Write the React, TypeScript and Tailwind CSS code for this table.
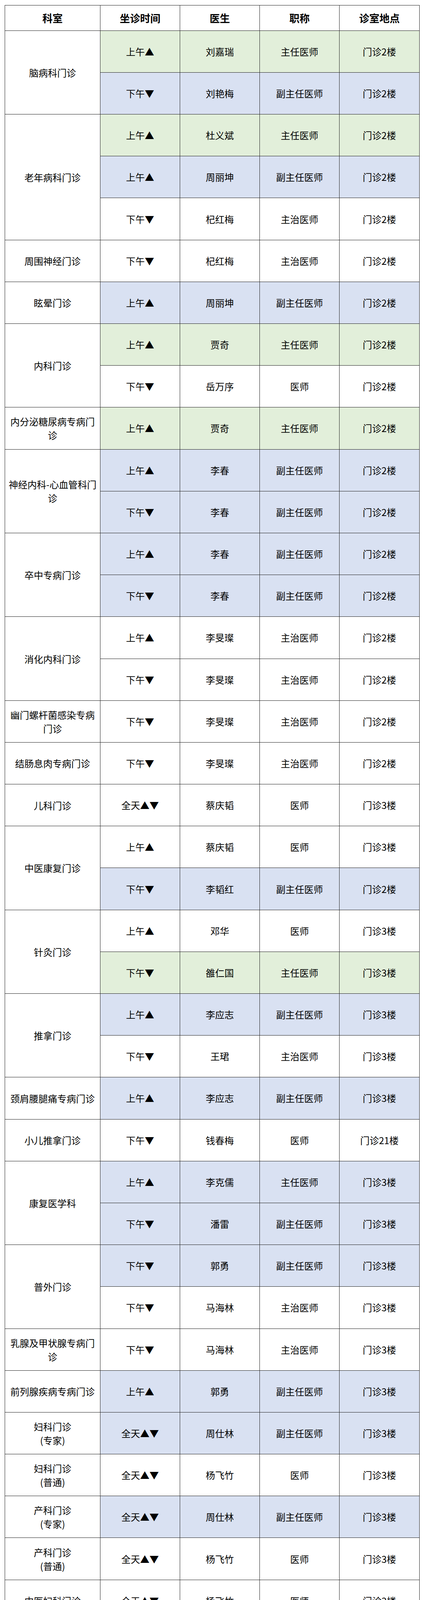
import React from 'react';

type Bg = 'g' | 'b' | 'w';
type Row = [string, string, string, string, Bg];
type Group = { dept: string[]; rows: Row[] };

const AM = '上午▲';
const PM = '下午▼';
const ALL = '全天▲▼';
const NOON = 'noon';

const bgClass: Record<Bg, string> = {
  g: 'bg-[#e2efda]',
  b: 'bg-[#d9e1f2]',
  w: 'bg-white',
};

const groups: Group[] = [
  { dept: ['脑病科门诊'], rows: [[AM, '刘嘉瑞', '主任医师', '门诊2楼', 'g'], [PM, '刘艳梅', '副主任医师', '门诊2楼', 'b']] },
  {
    dept: ['老年病科门诊'],
    rows: [
      [AM, '杜义斌', '主任医师', '门诊2楼', 'g'],
      [AM, '周丽坤', '副主任医师', '门诊2楼', 'b'],
      [PM, '杞红梅', '主治医师', '门诊2楼', 'w'],
    ],
  },
  { dept: ['周围神经门诊'], rows: [[PM, '杞红梅', '主治医师', '门诊2楼', 'w']] },
  { dept: ['眩晕门诊'], rows: [[AM, '周丽坤', '副主任医师', '门诊2楼', 'b']] },
  { dept: ['内科门诊'], rows: [[AM, '贾奇', '主任医师', '门诊2楼', 'g'], [PM, '岳万序', '医师', '门诊2楼', 'w']] },
  { dept: ['内分泌糖尿病专病门诊'], rows: [[AM, '贾奇', '主任医师', '门诊2楼', 'g']] },
  { dept: ['神经内科-心血管科门诊'], rows: [[AM, '李春', '副主任医师', '门诊2楼', 'b'], [PM, '李春', '副主任医师', '门诊2楼', 'b']] },
  { dept: ['卒中专病门诊'], rows: [[AM, '李春', '副主任医师', '门诊2楼', 'b'], [PM, '李春', '副主任医师', '门诊2楼', 'b']] },
  { dept: ['消化内科门诊'], rows: [[AM, '李旻璨', '主治医师', '门诊2楼', 'w'], [PM, '李旻璨', '主治医师', '门诊2楼', 'w']] },
  { dept: ['幽门螺杆菌感染专病门诊'], rows: [[PM, '李旻璨', '主治医师', '门诊2楼', 'w']] },
  { dept: ['结肠息肉专病门诊'], rows: [[PM, '李旻璨', '主治医师', '门诊2楼', 'w']] },
  { dept: ['儿科门诊'], rows: [[ALL, '蔡庆韬', '医师', '门诊3楼', 'w']] },
  { dept: ['中医康复门诊'], rows: [[AM, '蔡庆韬', '医师', '门诊3楼', 'w'], [PM, '李韬红', '副主任医师', '门诊2楼', 'b']] },
  { dept: ['针灸门诊'], rows: [[AM, '邓华', '医师', '门诊3楼', 'w'], [PM, '雒仁国', '主任医师', '门诊3楼', 'g']] },
  { dept: ['推拿门诊'], rows: [[AM, '李应志', '副主任医师', '门诊3楼', 'b'], [PM, '王珺', '主治医师', '门诊3楼', 'w']] },
  { dept: ['颈肩腰腿痛专病门诊'], rows: [[AM, '李应志', '副主任医师', '门诊3楼', 'b']] },
  { dept: ['小儿推拿门诊'], rows: [[PM, '钱春梅', '医师', '门诊21楼', 'w']] },
  { dept: ['康复医学科'], rows: [[AM, '李克儒', '主任医师', '门诊3楼', 'b'], [PM, '潘雷', '副主任医师', '门诊3楼', 'b']] },
  { dept: ['普外门诊'], rows: [[PM, '郭勇', '副主任医师', '门诊3楼', 'b'], [PM, '马海林', '主治医师', '门诊3楼', 'w']] },
  { dept: ['乳腺及甲状腺专病门诊'], rows: [[PM, '马海林', '主治医师', '门诊3楼', 'w']] },
  { dept: ['前列腺疾病专病门诊'], rows: [[AM, '郭勇', '副主任医师', '门诊3楼', 'b']] },
  { dept: ['妇科门诊', '(专家)'], rows: [[ALL, '周仕林', '副主任医师', '门诊3楼', 'b']] },
  { dept: ['妇科门诊', '(普通)'], rows: [[ALL, '杨飞竹', '医师', '门诊3楼', 'w']] },
  { dept: ['产科门诊', '(专家)'], rows: [[ALL, '周仕林', '副主任医师', '门诊3楼', 'b']] },
  { dept: ['产科门诊', '(普通)'], rows: [[ALL, '杨飞竹', '医师', '门诊3楼', 'w']] },
  { dept: ['中医妇科门诊'], rows: [[ALL, '杨飞竹', '医师', '门诊3楼', 'w']] },
  { dept: ['产后康复专病门诊'], rows: [[ALL, '周仕林', '副主任医师', '门诊3楼', 'b']] },
  { dept: ['更年期门诊'], rows: [[ALL, '周仕林', '副主任医师', '门诊3楼', 'b']] },
  { dept: ['耳鼻喉科'], rows: [[ALL, '李璐璐', '主治医师', '门诊3楼', 'w']] },
  { dept: ['眼科'], rows: [[ALL, '杨静晖', '主治医师', '门诊3楼', 'w']] },
  { dept: ['皮肤科'], rows: [[NOON, '杨榆婷', '主治医师', '门诊3楼', 'w'], [ALL, '凡福青', '医师', '门诊3楼', 'w']] },
  {
    dept: ['口腔科门诊'],
    rows: [
      [ALL, '汤爱金', '主治医师', '门诊4楼', 'w'],
      [PM, '浦丽仁', '主治医师', '门诊4楼', 'w'],
      [AM, '斯那永次', '医师', '门诊4楼', 'w'],
    ],
  },
  { dept: ['骨伤科·疼痛科'], rows: [[AM, '李军', '副主任医师', '门诊3楼', 'b'], [PM, '张运', '主任医师', '门诊3楼', 'g']] },
  { dept: ['骨质疏松专病门诊'], rows: [[AM, '李军', '副主任医师', '门诊3楼', 'b']] },
  { dept: ['治未病中医科门诊'], rows: [[AM, '王清', '副主任医师', '门诊2楼', 'b']] },
  { dept: ['药物咨询门诊'], rows: [[PM, '蔡定格', '副主任药师', '门诊14楼', 'b']] },
];

// little "sun with face" emoji
const SunFace: React.FC = () => {
  const pts: string[] = [];
  for (let i = 0; i < 32; i++) {
    const r = i % 2 === 0 ? 15.8 : 11.2;
    const a = (Math.PI * 2 * i) / 32 - Math.PI / 2;
    pts.push(`${(16 + r * Math.cos(a)).toFixed(2)},${(16 + r * Math.sin(a)).toFixed(2)}`);
  }
  return (
    <svg viewBox="0 0 32 32" width="25" height="25" className="inline-block align-[-4px]">
      <polygon points={pts.join(' ')} fill="#eb9a00" />
      <circle cx="16" cy="16" r="11" fill="#ffcf2e" stroke="#d98a00" strokeWidth="0.8" />
      <ellipse cx="12.3" cy="14" rx="1.5" ry="2" fill="#4a2f00" />
      <ellipse cx="19.7" cy="14" rx="1.5" ry="2" fill="#4a2f00" />
      <path d="M10.8 18.6 Q16 23.8 21.2 18.6" stroke="#4a2f00" strokeWidth="1.7" fill="none" strokeLinecap="round" />
    </svg>
  );
};

// keep the middle dot narrow, as in the picture
const DeptLine: React.FC<{ text: string }> = ({ text }) => {
  const parts = text.split('·');
  if (parts.length === 1) return <div>{text}</div>;
  return (
    <div>
      {parts[0]}
      <span className="font-['Liberation_Sans',sans-serif]">·</span>
      {parts[1]}
    </div>
  );
};

const cell = 'border border-[#222] px-1 text-center align-middle';

export default function App() {
  return (
    <div className="bg-white pt-[13px] pl-[12px] font-['Noto_Sans_CJK_SC',sans-serif] text-black">
      <table className="w-[1061px] table-fixed border-collapse">
        <colgroup>
          <col className="w-[244px]" />
          <col className="w-[204px]" />
          <col className="w-[204px]" />
          <col className="w-[204px]" />
          <col className="w-[205px]" />
        </colgroup>
        <thead>
          <tr className="h-[64.7px] text-[26px] font-bold">
            <th className={cell}>科室</th>
            <th className={cell}>坐诊时间</th>
            <th className={cell}>医生</th>
            <th className={cell}>职称</th>
            <th className={cell}>诊室地点</th>
          </tr>
        </thead>
        <tbody className="text-[24px]">
          {groups.map((g, gi) =>
            g.rows.map((r, ri) => (
              <tr key={`${gi}-${ri}`} className="h-[107.2px]">
                {ri === 0 && (
                  <td rowSpan={g.rows.length} className={`${cell} bg-white leading-[35px]`}>
                    {g.dept.map((d, di) => (
                      <DeptLine key={di} text={d} />
                    ))}
                  </td>
                )}
                <td className={`${cell} ${bgClass[r[4]]}`}>
                  {r[0] === NOON ? (
                    <span className="whitespace-nowrap">
                      上午▲午间
                      <SunFace />
                    </span>
                  ) : (
                    r[0]
                  )}
                </td>
                <td className={`${cell} ${bgClass[r[4]]}`}>{r[1]}</td>
                <td className={`${cell} ${bgClass[r[4]]}`}>{r[2]}</td>
                <td className={`${cell} ${bgClass[r[4]]}`}>{r[3]}</td>
              </tr>
            )),
          )}
        </tbody>
      </table>
    </div>
  );
}
